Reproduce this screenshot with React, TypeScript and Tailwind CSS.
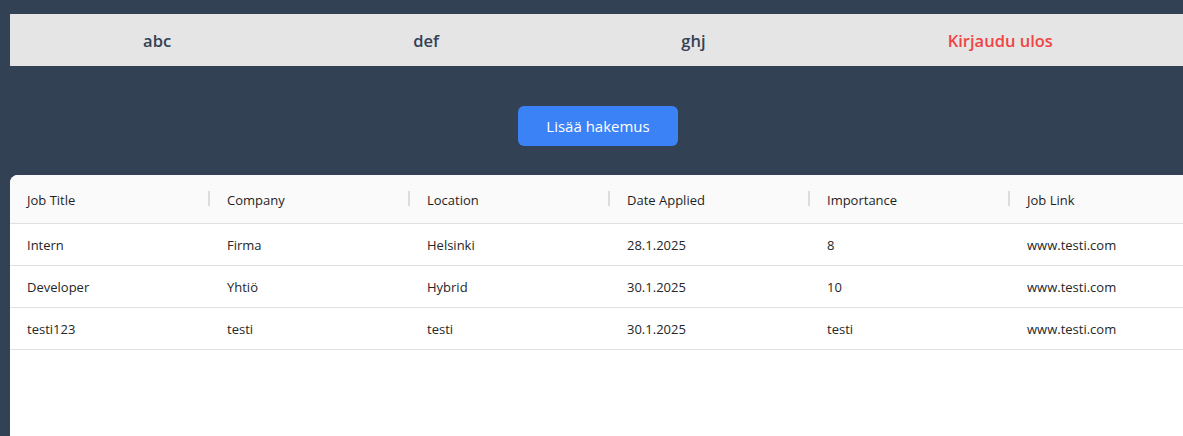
import React from "react";

const cols = ["Job Title", "Company", "Location", "Date Applied", "Importance", "Job Link"];
const rows = [
  ["Intern", "Firma", "Helsinki", "28.1.2025", "8", "www.testi.com"],
  ["Developer", "Yhtiö", "Hybrid", "30.1.2025", "10", "www.testi.com"],
  ["testi123", "testi", "testi", "30.1.2025", "testi", "www.testi.com"],
];

export default function App() {
  return (
    <div
      className="min-h-screen w-full overflow-hidden bg-[#334155]"
      style={{ fontFamily: '"Open Sans", "Noto Sans", sans-serif' }}
    >
      <div className="ml-[10px] w-[1176px] pt-[14px]">
        <nav className="flex h-[52px] items-center justify-around bg-[#e5e5e5] px-[12px] pt-[2px]">
          <span className="text-[16.5px] font-semibold text-[#334155]">abc</span>
          <span className="text-[16.5px] font-semibold text-[#334155]">def</span>
          <span className="text-[16.5px] font-semibold text-[#334155]">ghj</span>
          <span className="text-[16.5px] font-semibold text-[#ef4444]">Kirjaudu ulos</span>
        </nav>
        <div className="flex justify-center pt-[40px] pb-[29px]">
          <button className="h-[40px] w-[160px] rounded-[6px] bg-[#3b82f6] text-[15px] text-white">
            Lisää hakemus
          </button>
        </div>
        <div className="h-[300px] w-[1200px] rounded-t-[8px] bg-white">
          <div className="flex h-[49px] items-center rounded-t-[8px] border-b border-[#e0e0e0] bg-[#fafafa]">
            {cols.map((c, i) => (
              <div key={c} className="relative flex h-full w-[200px] items-center pl-[17px] pt-[3px] text-[13px] text-[#1f1f1f]">
                {c}
                {i < cols.length - 1 && (
                  <span className="absolute right-0 top-[16px] h-[15px] w-[2px] bg-[#dcdcdc]" />
                )}
              </div>
            ))}
          </div>
          {rows.map((r, ri) => (
            <div key={ri} className="flex h-[42px] items-center border-b border-[#e0e0e0] pt-[3px]">
              {r.map((v, i) => (
                <div key={i} className="w-[200px] pl-[17px] text-[13px] text-[#262626]">
                  {v}
                </div>
              ))}
            </div>
          ))}
        </div>
      </div>
    </div>
  );
}
